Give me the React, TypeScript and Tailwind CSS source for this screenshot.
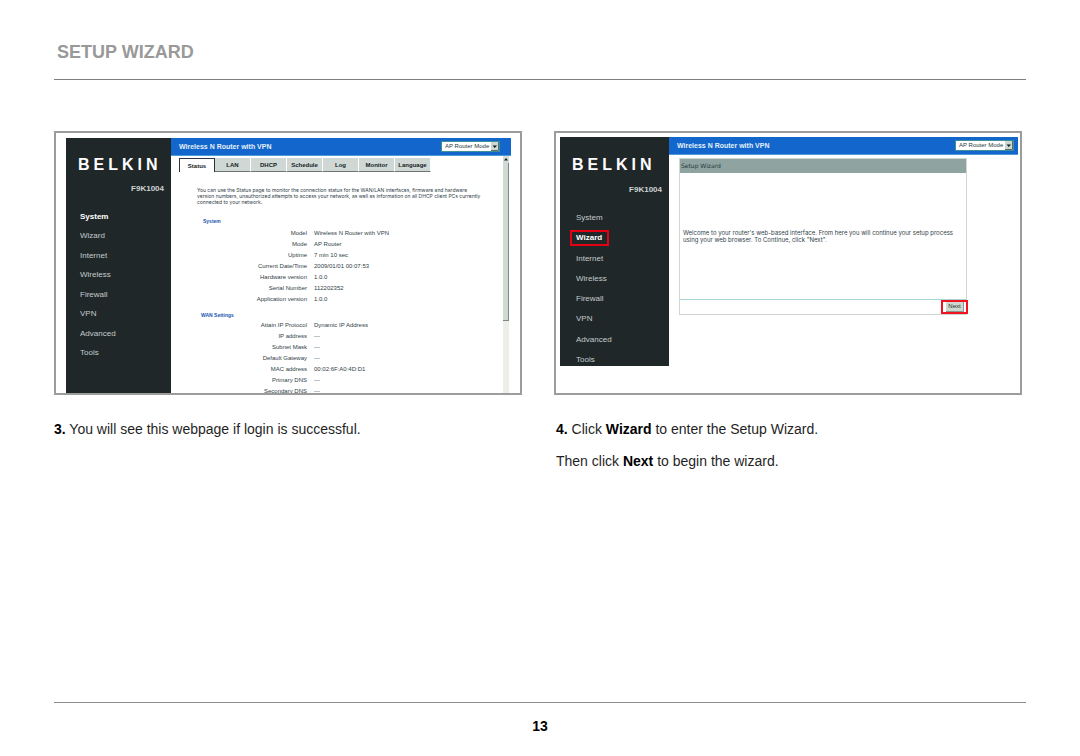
import clsx from "clsx";
import type { ReactNode } from "react";

const menuItems = [
  "System",
  "Wizard",
  "Internet",
  "Wireless",
  "Firewall",
  "VPN",
  "Advanced",
  "Tools",
];

const tabs = ["Status", "LAN", "DHCP", "Schedule", "Log", "Monitor", "Language"];

const systemRows = [
  ["Model", "Wireless N Router with VPN"],
  ["Mode", "AP Router"],
  ["Uptime", "7 min 10 sec"],
  ["Current Date/Time", "2009/01/01 00:07:53"],
  ["Hardware version", "1.0.0"],
  ["Serial Number", "112202352"],
  ["Application version", "1.0.0"],
];

const wanRows = [
  ["Attain IP Protocol", "Dynamic IP Address"],
  ["IP address", "---"],
  ["Subnet Mask", "---"],
  ["Default Gateway", "---"],
  ["MAC address", "00:02:6F:A0:4D:D1"],
  ["Primary DNS", "---"],
  ["Secondary DNS", "---"],
];

function Logo() {
  return (
    <div className="pl-3 text-[16px] leading-5 font-bold tracking-[4px] text-white">
      BELKIN
    </div>
  );
}

function Menu({
  active,
  highlight,
  className,
}: {
  active: string;
  highlight?: boolean;
  className?: string;
}) {
  return (
    <nav className={clsx("grid grid-rows-8 text-[8px] leading-3", className)}>
      {menuItems.map((item) => (
        <div key={item} className="flex items-center">
          <a
            href="#"
            className={clsx(
              item === active ? "font-bold text-white" : "text-[#c3cbcb]",
              item === active && highlight
                ? "border-2 border-[#e60012] pr-[5px] pl-1"
                : "px-[6px]"
            )}
          >
            {item}
          </a>
        </div>
      ))}
    </nav>
  );
}

function TitleBar({ id, className }: { id: string; className?: string }) {
  return (
    <div
      className={clsx(
        "flex h-[18px] items-center justify-between border-b border-[#4f9ad8] bg-[#1266cc] pl-2",
        className
      )}
    >
      <span className="pt-[2px] text-[7px] font-bold text-[#e4f1fb]">
        Wireless N Router with VPN
      </span>
      <div className="relative flex h-[11px] w-[59px] border border-[#3f8f98] bg-white">
        <select
          id={id}
          aria-label="Router mode"
          className="w-full appearance-none bg-white pl-[3px] text-[6px] leading-[9px] text-[#26383c]"
        >
          <option>AP Router Mode</option>
        </select>
        <svg
          viewBox="0 0 8 9"
          className="pointer-events-none absolute top-0 right-0 h-[9px] w-2"
        >
          <rect width="8" height="9" fill="#cdd8d2" />
          <path d="M0 8.5h7.5V0" fill="none" stroke="#5c6e69" />
          <path d="M1.5 3.5h4.5L3.75 6z" fill="#101c1c" />
        </svg>
      </div>
    </div>
  );
}

function InfoTable({ rows }: { rows: string[][] }) {
  return (
    <table className="w-full table-fixed text-[6px] leading-[11px] text-[#2f4148]">
      <tbody>
        {rows.map(([label, value]) => (
          <tr key={label}>
            <th className="w-[128px] p-0 text-right font-normal">{label}</th>
            <td className="p-0 pl-[7px]">{value}</td>
          </tr>
        ))}
      </tbody>
    </table>
  );
}

function Scrollbar() {
  return (
    <div className="flex w-[6px] shrink-0 flex-col bg-[#eceee8]">
      <svg viewBox="0 0 6 7" className="h-[7px] w-[6px]">
        <rect width="6" height="7" fill="#d2dcd6" />
        <path d="M1 4.5h4L3 2z" fill="#16211f" />
      </svg>
      <div className="h-[158px] border-r border-b border-[#7d8688] bg-[#d0dad3]" />
    </div>
  );
}

function StatusScreen() {
  return (
    <div className="flex border-2 border-[#9c9c9c] pt-[5px] pr-[9px] pl-[10px]">
      <aside className="w-[105px] shrink-0 bg-[#202729] pt-[17px] pb-[30px]">
        <Logo />
        <p className="mt-2 pr-[7px] text-right text-[8px] leading-3 font-bold text-[#cdd4d4]">
          F9K1004
        </p>
        <Menu active="System" className="mt-3 h-[156px] pl-2" />
      </aside>
      <div className="flex h-[255px] min-w-0 flex-1 flex-col overflow-hidden">
        <TitleBar id="mode-status" className="shrink-0 pr-[11px]" />
        <div className="flex min-h-0 flex-1 justify-between pr-[2px]">
          <div className="min-w-0 flex-1 pt-[2px] pl-2">
            <div className="flex">
              {tabs.map((tab, i) => (
                <button
                  key={tab}
                  className={clsx(
                    "h-[14px] w-9 text-[6px] leading-3 font-bold text-[#141c1e]",
                    i === 0
                      ? "border-t border-r border-l border-[#2b3436] bg-white"
                      : "border-r border-b border-r-white border-b-[#6b7674] bg-[#cfd8d5]"
                  )}
                >
                  {tab}
                </button>
              ))}
            </div>
            <p className="mt-[15px] pl-[18px] font-['Inter',sans-serif] text-[5px] leading-[6px] whitespace-nowrap text-[#2f4148]">
              You can use the Status page to monitor the connection status for
              the WAN/LAN interfaces, firmware and hardware
              <br />
              version numbers, unauthorized attempts to access your network, as
              well as information on all DHCP client PCs currently
              <br />
              connected to your network.
            </p>
            <h3 className="mt-[13px] mb-1 pl-6 text-[5px] leading-[6px] font-bold text-[#1a55b0]">
              System
            </h3>
            <InfoTable rows={systemRows} />
            <h3 className="mt-[7px] mb-[2px] pl-[22px] text-[5px] leading-[6px] font-bold text-[#1a55b0]">
              WAN Settings
            </h3>
            <InfoTable rows={wanRows} />
          </div>
          <Scrollbar />
        </div>
      </div>
    </div>
  );
}

function WizardScreen() {
  return (
    <div className="flex h-full items-start border-2 border-[#9c9c9c] pt-1 pr-[2px] pl-1">
      <aside className="h-[229px] w-[109px] shrink-0 overflow-hidden bg-[#202729] pt-[18px]">
        <Logo />
        <p className="mt-[9px] pr-[7px] text-right text-[8px] leading-3 font-bold text-[#cdd4d4]">
          F9K1004
        </p>
        <Menu active="Wizard" highlight className="mt-3 h-[162px] pl-[10px]" />
      </aside>
      <div className="min-w-0 flex-1">
        <TitleBar id="mode-wizard" className="pr-1" />
        <div className="mt-[3px] mr-[51px] ml-[10px] border border-[#cfd6d0] font-['DejaVu_Sans',sans-serif]">
          <h3 className="bg-[#8fa3a1] pl-px text-[6px] leading-[14px] text-[#26383c]">
            Setup Wizard
          </h3>
          <p className="flex h-[126px] items-center pl-[3px] font-['Inter',sans-serif] text-[6px] leading-[7px] whitespace-nowrap text-[#2f4148]">
            Welcome to your router's web-based interface. From here you will
            continue your setup process
            <br />
            using your web browser. To Continue, click "Next".
          </p>
          <div className="flex h-[15px] items-center justify-end border-t border-[#a9d6d6]">
            <div className="-mr-[2px] border-2 border-[#f01420] pr-[2px] pl-[3px]">
              <button className="block h-[10px] w-[18px] border-r border-b border-[#8a9590] bg-[#cfd8cf] font-['Liberation_Sans',sans-serif] text-[6px] leading-[9px] text-[#1c2a2c]">
                Next
              </button>
            </div>
          </div>
        </div>
      </div>
    </div>
  );
}

function Step({ screen, children }: { screen: ReactNode; children: ReactNode }) {
  return (
    <section className="flex flex-col">
      <div className="h-[264px]">{screen}</div>
      <div className="pt-[18px] text-[14px] leading-8">{children}</div>
    </section>
  );
}

export default function App() {
  return (
    <div className="flex min-h-screen flex-col bg-white px-[54px] font-['Liberation_Sans',Arial,sans-serif] text-[#1f1f1f]">
      <header className="border-b border-[#7f7f7f] pt-10 pb-[15px] pl-[3px]">
        <h1 className="text-[18px] leading-6 font-bold text-[#999999]">
          SETUP WIZARD
        </h1>
      </header>

      <main className="grid grid-cols-2 gap-8 pt-[51px] pr-1">
        <Step screen={<StatusScreen />}>
          <p>
            <b className="text-black">3.</b> You will see this webpage if login
            is successful.
          </p>
        </Step>
        <Step screen={<WizardScreen />}>
          <p className="pl-[2px]">
            <b className="text-black">4.</b> Click{" "}
            <b className="text-black">Wizard</b> to enter the Setup Wizard.
          </p>
          <p className="pl-[2px]">
            Then click <b className="text-black">Next</b> to begin the wizard.
          </p>
        </Step>
      </main>

      <footer className="mt-auto border-t border-[#8c8c8c] pt-[11px] pb-[18px] text-center text-[14px] leading-6 font-bold text-black">
        13
      </footer>
    </div>
  );
}
